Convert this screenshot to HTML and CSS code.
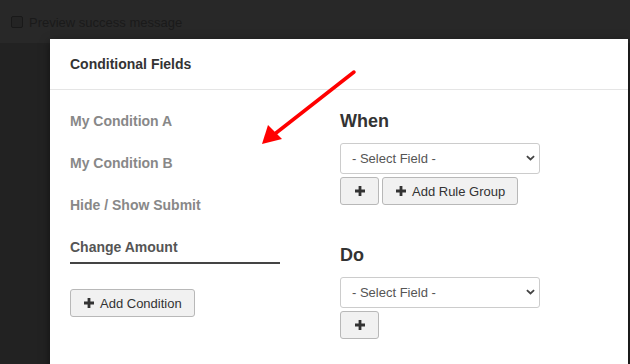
FILE: index.html
```html
<!DOCTYPE html>
<html>
<head>
<meta charset="utf-8">
<link rel="stylesheet" href="styles.css">
</head>
<body>
<div class="topbar">
  <label class="preview"><span class="cb"></span>Preview success message</label>
</div>
<div class="modal">
  <div class="modal-header">Conditional Fields</div>
  <div class="modal-body">
    <div class="conditions">
      <div class="cond">My Condition A</div>
      <div class="cond">My Condition B</div>
      <div class="cond">Hide / Show Submit</div>
      <div class="cond active">Change Amount</div>
      <button class="btn add-cond"><svg class="plus" viewBox="0 0 10 10"><path d="M3.6 0h2.8v3.6H10v2.8H6.4V10H3.6V6.4H0V3.6h3.6z"/></svg>Add Condition</button>
    </div>
    <div class="rules">
      <h3 class="sec when">When</h3>
      <div class="select-wrap">
        <select class="field"><option>- Select Field -</option></select>
        <svg class="chev" viewBox="0 0 10 6"><path d="M1 1l4 3.6L9 1" fill="none" stroke="#444" stroke-width="2"/></svg>
      </div>
      <div class="btn-row">
        <button class="btn icon-only"><svg class="plus" viewBox="0 0 10 10"><path d="M3.6 0h2.8v3.6H10v2.8H6.4V10H3.6V6.4H0V3.6h3.6z"/></svg></button>
        <button class="btn"><svg class="plus" viewBox="0 0 10 10"><path d="M3.6 0h2.8v3.6H10v2.8H6.4V10H3.6V6.4H0V3.6h3.6z"/></svg>Add Rule Group</button>
      </div>
      <h3 class="sec do">Do</h3>
      <div class="select-wrap">
        <select class="field"><option>- Select Field -</option></select>
        <svg class="chev" viewBox="0 0 10 6"><path d="M1 1l4 3.6L9 1" fill="none" stroke="#444" stroke-width="2"/></svg>
      </div>
      <div class="btn-row">
        <button class="btn icon-only"><svg class="plus" viewBox="0 0 10 10"><path d="M3.6 0h2.8v3.6H10v2.8H6.4V10H3.6V6.4H0V3.6h3.6z"/></svg></button>
      </div>
    </div>
  </div>
</div>
<svg class="arrow" width="630" height="364" viewBox="0 0 630 364">
  <line x1="354" y1="72" x2="276" y2="133" stroke="#f00" stroke-width="3.5" stroke-linecap="round"/>
  <polygon points="262,144 268,125 282,139" fill="#f00"/>
</svg>
</body>
</html>
```
FILE: styles.css
```css
html, body {
  margin: 0;
  padding: 0;
}
body {
  width: 630px;
  height: 364px;
  overflow: hidden;
  background: #222222;
  font-family: "Liberation Sans", Arial, sans-serif;
  position: relative;
}
.topbar {
  height: 43px;
  background: #282828;
  display: flex;
  align-items: center;
  padding-left: 11px;
}
.preview {
  display: flex;
  align-items: center;
  font-size: 13px;
  color: #1a1a1a;
  margin-top: 1px;
}
.cb {
  width: 10px;
  height: 10px;
  border: 1px solid #191919;
  border-radius: 2px;
  background: #242424;
  margin-right: 6px;
}
.modal {
  position: absolute;
  left: 50px;
  top: 39px;
  width: 578px;
  height: 340px;
  background: #fff;
  box-shadow: 0 3px 9px rgba(0,0,0,0.5);
}
.modal-header {
  height: 50px;
  line-height: 50px;
  padding: 0 20px;
  border-bottom: 1px solid #e5e5e5;
  font-size: 14px;
  font-weight: bold;
  color: #333;
}
.modal-body {
  display: flex;
  gap: 60px;
  padding: 10px 20px;
}
.conditions {
  width: 210px;
  display: flex;
  flex-direction: column;
  align-items: flex-start;
}
.cond {
  align-self: stretch;
  font-size: 14px;
  font-weight: bold;
  color: #888;
  line-height: 20px;
  padding: 11px 0;
}
.cond.active {
  color: #555;
  padding-bottom: 5px;
  border-bottom: 2px solid #444;
}
.btn {
  display: inline-flex;
  align-items: center;
  height: 28px;
  padding: 0 12px 0 13px;
  font-family: "Liberation Sans", Arial, sans-serif;
  font-size: 13px;
  color: #333;
  background: #f1f1f1;
  border: 1px solid #b8b8b8;
  border-radius: 3px;
  box-sizing: border-box;
}
.plus {
  width: 10px;
  height: 10px;
  fill: #333;
  margin-right: 6px;
}
.icon-only {
  width: 39px;
  padding: 0;
  justify-content: center;
}
.icon-only .plus {
  margin: 0;
}
.add-cond {
  margin-top: 25px;
}
.rules {
  width: 250px;
}
.sec {
  margin: 0;
  font-size: 18px;
  line-height: 20px;
  font-weight: bold;
  color: #333;
}
.when {
  margin-top: 11px;
  margin-bottom: 12px;
}
.do {
  margin-top: 40px;
  margin-bottom: 12px;
}
.select-wrap {
  position: relative;
  width: 200px;
}
.field {
  appearance: none;
  -webkit-appearance: none;
  display: block;
  width: 200px;
  height: 31px;
  box-sizing: border-box;
  padding: 0 11px;
  font-family: "Liberation Sans", Arial, sans-serif;
  font-size: 13px;
  color: #555;
  background: #fff;
  border: 1px solid #ccc;
  border-radius: 3px;
}
.chev {
  position: absolute;
  right: 5px;
  top: 12px;
  width: 9px;
  height: 6px;
}
.btn-row {
  display: flex;
  gap: 3px;
  margin-top: 3px;
}
.arrow {
  position: absolute;
  left: 0;
  top: 0;
}
```
